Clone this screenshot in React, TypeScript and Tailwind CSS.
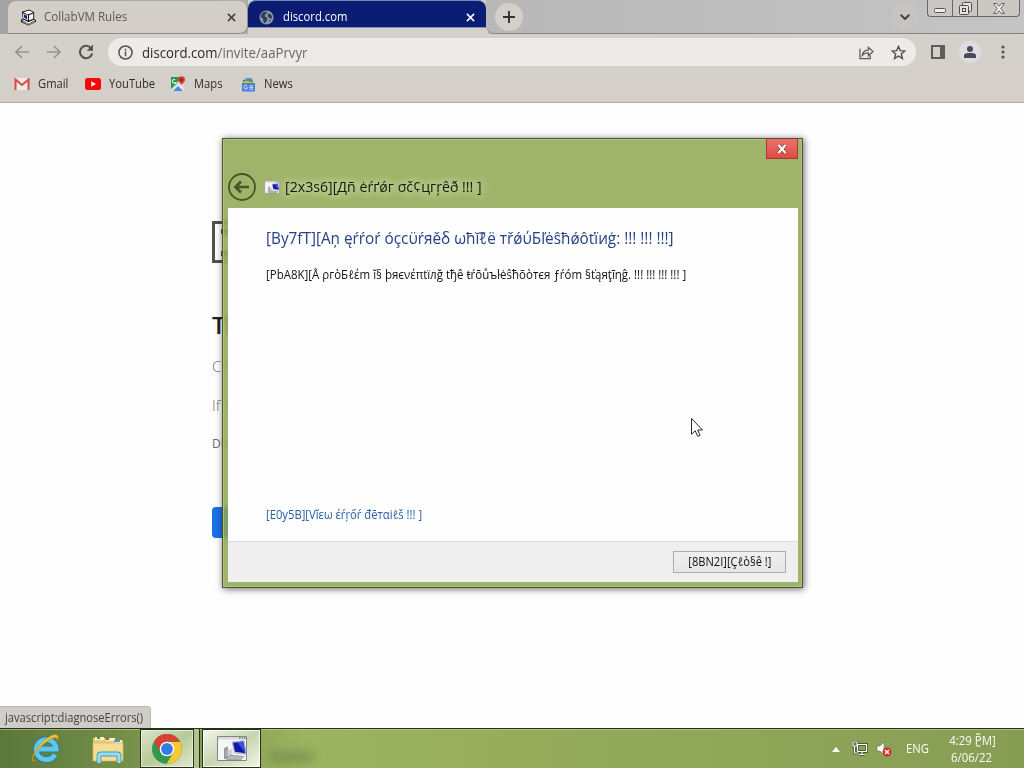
import type { ReactNode } from "react";

function CloseIcon({ className }: { className: string }) {
  return (
    <svg viewBox="0 0 10 10" className={className} fill="none" stroke="currentColor" strokeWidth="1.7">
      <path d="M1 1l8 8M9 1L1 9" />
    </svg>
  );
}

function CollabIcon() {
  return (
    <svg viewBox="0 0 18 18" className="h-[17px] w-[17px]">
      <path d="M2 3l8-2.500 5 3v7l2 1.500v1.500l-8 4L1 14v-2.500l2-1z" fill="#111" />
      <path d="M3.500 3.500L10 1.700l3.800 2.100L8 5.800z" fill="#fff" />
      <path d="M3 4.500l5.500 2.200v5.600L3.500 10z" fill="#e9e9ee" />
      <path d="M4 5.800l3.500 1.400v3.600L4.500 9.300z" fill="#141c78" />
      <path d="M9.500 6.500L14 4.800v5.500l-4.500 2z" fill="#f4f4f4" />
      <path d="M2.200 12l1.800-.500 5 2.500 5.500-2.700 1.300.700L9 15.500z" fill="#fff" />
      <path d="M2 13.300l7 3 6.800-3.300" fill="none" stroke="#ddd" strokeWidth=".8" />
    </svg>
  );
}

function GlobeIcon() {
  return (
    <svg viewBox="0 0 16 16" className="h-[15px] w-[15px]">
      <circle cx="8" cy="8" r="7.500" fill="#8d98a5" />
      <path d="M2 5.500C3 3 5.500 1.800 8.500 2L8 4l-2 1 .500 2L9 8.500 8.500 11 6.500 14C4 13 4.500 10.500 4.500 9.500L2 7.500zM10.500 3.500L13 5l1 3-1.500 1.500L10.500 8 9 6.500zM10.500 11l2-.500-1.500 2z" fill="#2c3b5e" />
    </svg>
  );
}

function TabStrip() {
  return (
    <div className="flex h-[34px] bg-linear-to-r from-[#a3a3a5] via-[#bababa] to-[#c2c2c2] pl-2">
      <div className="mt-px flex h-[33px] w-60 items-center rounded-t-lg rounded-br-lg border-r border-b border-[#8e8b86] bg-[#d3cec7] pr-[11px] pl-3 text-[#5b5854]">
        <CollabIcon />
        <span className="ml-[7px] origin-left scale-x-[0.965] text-[12px] whitespace-nowrap">CollabVM Rules</span>
        <CloseIcon className="ml-auto h-[9px] w-[9px] text-[#45423f]" />
      </div>
      <div className="h-[34px] w-[240px] bg-[#d5d0ca]">
        <div className="flex h-[28px] w-[238px] items-center rounded-t-lg border-t border-b border-t-[#7188b5] border-b-[#8290b5] bg-[#0b1d72] pt-[8px] pr-[11px] pb-[2px] pl-[11px] text-white">
          <GlobeIcon />
          <span className="ml-[9px] origin-left scale-x-[0.94] text-[12px] whitespace-nowrap">discord.com</span>
          <CloseIcon className="ml-auto h-[9px] w-[9px]" />
        </div>
      </div>
      <div className="-ml-[2px] flex h-[34px] flex-1 rounded-bl-lg border-b border-[#858585] bg-linear-to-r from-[#b8b8b8] to-[#c4c4c4]">
        <div className="mt-[3px] ml-[9px] flex h-7 w-7 items-center justify-center rounded-full bg-[#d3cfc9]">
          <svg viewBox="0 0 12 12" className="h-3 w-3" stroke="#333" strokeWidth="1.900">
            <path d="M6 0v12M0 6h12" />
          </svg>
        </div>
        <div className="mt-[3px] ml-auto flex h-7 w-7 items-center justify-center rounded-full bg-[#c8c4bf]">
          <svg viewBox="0 0 10 6" className="h-[6px] w-[10px]" fill="none" stroke="#444" strokeWidth="2">
            <path d="M.700.700L5 5l4.300-4.300" />
          </svg>
        </div>
        <div className="mr-1 ml-2 flex h-[17px] w-[93px] rounded-b border border-t-0 border-[#686664] bg-[#cbc8c3]">
          <span className="flex w-[25px] items-center justify-center border-r border-[#686664] pt-[5px]">
            <svg viewBox="0 0 12 5" className="h-[5px] w-3">
              <rect x=".500" y=".500" width="11" height="4" rx="1" fill="#eee" stroke="#555" />
            </svg>
          </span>
          <span className="flex w-[25px] items-center justify-center border-r border-[#686664]">
            <svg viewBox="0 0 13 13" className="h-[13px] w-[13px]" fill="#e5e3df" stroke="#4c4c4c">
              <rect x="3.500" y=".500" width="9" height="9" rx="1" />
              <rect x=".500" y="3.500" width="9" height="9" rx="1" />
              <rect x="3.500" y="6.500" width="3" height="3" />
            </svg>
          </span>
          <span className="flex flex-1 items-center justify-center">
            <svg viewBox="0 0 12 11" className="h-[11px] w-3">
              <path d="M.600.500h3L6 3.300 8.400.500h3L7.800 5.500l3.600 5h-3L6 7.700l-2.400 2.800h-3l3.600-5z" fill="#eee" stroke="#555" strokeWidth=".9" />
            </svg>
          </span>
        </div>
      </div>
    </div>
  );
}

function Toolbar() {
  return (
    <div className="flex h-9 items-center bg-[#d4d0ca]">
      <svg viewBox="0 0 16 14" className="ml-[14px] h-[14px] w-4" fill="none" stroke="#96928e" strokeWidth="1.600">
        <path d="M15 7H2M8 1L2 7l6 6" />
      </svg>
      <svg viewBox="0 0 16 14" className="ml-4 h-[14px] w-4" fill="none" stroke="#96928e" strokeWidth="1.600">
        <path d="M1 7h13M8 1l6 6-6 6" />
      </svg>
      <svg viewBox="0 0 16 16" className="ml-4 h-4 w-4" fill="none" stroke="#56534f" strokeWidth="2.100">
        <path d="M13.300 4.500A6.200 6.200 0 1 0 14.200 9.500" />
        <path d="M15 .500v6.300H8.700z" fill="#56534f" stroke="none" />
      </svg>
      <div className="ml-[14px] flex h-7 w-[808px] items-center rounded-full bg-[#ecebe7] pr-[10px] pl-[10px]">
        <svg viewBox="0 0 16 16" className="h-[15px] w-[15px]" fill="none" stroke="#55524f" strokeWidth="1.600">
          <circle cx="8" cy="8" r="7" />
          <path d="M8 7v5M8 4v1.800" />
        </svg>
        <span className="ml-[9px] origin-left scale-x-[0.945] text-[14px] whitespace-nowrap text-[#2b2a29]">
          discord.com<span className="text-[#6a6764]">/invite/aaPrvyr</span>
        </span>
        <svg viewBox="0 0 16 16" className="ml-auto h-[15px] w-[15px]" fill="none" stroke="#5c5956" strokeWidth="1.300">
          <path d="M1 4v10.500h11V11" />
          <path d="M3.500 11c.500-4 3-5.500 6.500-5.500V2.500L15 7l-5 4.500V8.500C7 8.500 5 9 3.500 11z" />
        </svg>
        <svg viewBox="0 0 16 16" className="ml-[17px] h-[15px] w-[15px]" fill="none" stroke="#55524f" strokeWidth="1.500">
          <path d="M8 1.500l1.900 4.500 4.800.400-3.700 3.200 1.200 4.800L8 11.800l-4.200 2.600L5 9.600 1.300 6.400l4.800-.400z" />
        </svg>
      </div>
      <svg viewBox="0 0 14 14" className="ml-[15px] h-[14px] w-[14px]">
        <path d="M0 0h14v14H0zM2 2v10h7V2z" fill="#605d59" fillRule="evenodd" />
      </svg>
      <div className="ml-[14px] flex h-[22px] w-[22px] items-center justify-center rounded-full bg-[#dddde1]">
        <svg viewBox="0 0 12 12" className="h-3 w-3" fill="#474b59">
          <circle cx="6" cy="3" r="3" />
          <path d="M0 12V9.500C0 7.500 3 7 6 7s6 .500 6 2.500V12z" />
        </svg>
      </div>
      <svg viewBox="0 0 4 14" className="ml-5 h-[14px] w-1" fill="#56534f">
        <circle cx="2" cy="2" r="1.600" />
        <circle cx="2" cy="7" r="1.600" />
        <circle cx="2" cy="12" r="1.600" />
      </svg>
    </div>
  );
}

function Bookmark({ label, width, children }: { label: string; width: string; children: ReactNode }) {
  return (
    <div className={`flex items-center ${width}`}>
      {children}
      <span className="ml-2 origin-left scale-x-[0.935] text-[12px] whitespace-nowrap text-[#2f2d2b]">{label}</span>
    </div>
  );
}

function BookmarksBar() {
  return (
    <div className="flex h-[33px] items-center border-b border-[#b1aeaa] bg-[#d4d0c9] pb-[4px] pl-[14px]">
      <Bookmark label="Gmail" width="w-[71px]">
        <svg viewBox="0 0 16 12" className="h-3 w-4">
          <path d="M1 0h14v12H1z" fill="#eeeae7" />
          <path d="M1.500 12V1.500L8 7l6.500-5.500V12" fill="none" stroke="#d64a48" strokeWidth="2" />
        </svg>
      </Bookmark>
      <Bookmark label="YouTube" width="w-[85px]">
        <svg viewBox="0 0 16 12" className="h-3 w-4">
          <rect width="16" height="12" rx="2.500" fill="#f50808" />
          <path d="M6.300 3.300L11 6l-4.700 2.700z" fill="#fff" />
        </svg>
      </Bookmark>
      <Bookmark label="Maps" width="w-[71px]">
        <svg viewBox="0 0 16 16" className="h-4 w-4">
          <path d="M1 1h10L6 8l-5 5z" fill="#23985a" />
          <path d="M1 15L12 3l2 12z" fill="#e9e7e0" />
          <path d="M3 15l5-5 5 5z" fill="#4887ec" />
          <path d="M5 3.500a2 2 0 1 0 1 3H4" fill="none" stroke="#d5f2da" strokeWidth="1.100" />
          <path d="M11.500 10c0-2.500-3.500-3.500-3.500-6.200a3.500 3.500 0 0 1 7 0c0 2.700-3.500 3.700-3.500 6.200z" fill="#d83c35" />
          <circle cx="11.500" cy="3.800" r="1.300" fill="#811b1b" />
        </svg>
      </Bookmark>
      <Bookmark label="News" width="w-[71px]">
        <svg viewBox="0 0 16 16" className="h-[15px] w-[15px]">
          <path d="M2 3l10-1 1 4H2z" fill="#2c9b58" />
          <path d="M5 1h6v3H5z" fill="#5a91c2" />
          <path d="M1 6l4-2 10 2v2H1z" fill="#e3b83b" />
          <rect x="1" y="6.500" width="14" height="9" rx="1" fill="#4680df" />
          <path d="M6.500 9.500a2 2 0 1 0 .500 2H5.500M9 9.500h4M9 11.300h4M9 13h4" fill="none" stroke="#dce8ff" strokeWidth="1" />
        </svg>
      </Bookmark>
    </div>
  );
}

// Error page that is mostly hidden behind the troubleshooter window
function ErrorPage() {
  return (
    <div className="flex-1 bg-[#fefefe] pt-[118px] pl-[212px] text-[#6b6e72]">
      <div className="h-[42px] w-[52px] border-[3px] border-[#535353] pt-[5px] pl-[6px]">
        <div className="h-[5px] w-3 bg-[#535353]" />
        <div className="mt-[17px] h-[5px] w-3 bg-[#535353]" />
      </div>
      <p className="mt-[46px] text-[24px] leading-8 font-semibold text-[#202124]">This site can’t be reached</p>
      <p className="mt-[14px] text-[15px] leading-[22px] font-light">Check if there is a typo in discord.com.</p>
      <p className="mt-[17px] text-[15px] leading-[22px] font-light">If spelling is correct, try running Windows Network Diagnostics.</p>
      <p className="mt-[19px] text-[12px] leading-[18px]">DNS_PROBE_FINISHED_NXDOMAIN</p>
      <div className="mt-[54px] h-[31px] w-[75px] rounded bg-[#1b73e8]" />
    </div>
  );
}

function ComputerIcon({ className }: { className: string }) {
  return (
    <svg viewBox="0 0 30 26" className={className}>
      <path d="M.500.500h29v24H.500z" fill="#f6f6f6" stroke="#858585" />
      <path d="M1 1h28v2.500H1z" fill="#d9dadd" />
      <path d="M22 2h1.500M24.500 2H26M27 2h1.500" stroke="#444" />
      <path d="M7.500 12.500l3-1.500v10l-3 1.500z" fill="#aaa" stroke="#666" strokeWidth=".6" />
      <path d="M10.500 14l5-1v8l-5 1z" fill="#d0d0d6" />
      <path d="M15 6l12-1.500 2.500 14-12-1.500z" fill="#c9cedc" stroke="#777c94" strokeWidth=".4" />
      <path d="M16 6.800l10.200-1.300 2.200 11.800-10.400-1.500z" fill="#1018a8" />
      <path d="M20 6.300l6.200-.800 2.200 11.800z" fill="#3d50d8" />
      <path d="M8 22.500l6-3.500 13 1.500-3.500 3.500H11z" fill="#b5b6bd" stroke="#777" strokeWidth=".5" />
    </svg>
  );
}

function TroubleshooterWindow() {
  return (
    <div className="absolute top-[138px] left-[222px] flex h-[450px] w-[581px] flex-col border border-[#4b582f] bg-[#8fa650]/85 pr-1 pb-[5px] pl-[5px] shadow-[1px_1px_7px_rgba(0,0,0,0.6),inset_0_0_0_1px_rgba(190,205,150,0.6)] backdrop-blur-[2px]">
      <div className="h-[69px] shrink-0">
        <div className="ml-auto flex h-[20px] w-[32px] items-center justify-center border border-t-0 border-[#a83a35] bg-linear-to-b from-[#ee7069] to-[#dc4c48]">
          <svg viewBox="0 0 12 10" className="h-[10px] w-3">
            <path d="M2.500 1l7 8M9.500 1l-7 8" stroke="#7d3c3c" strokeWidth="3.600" />
            <path d="M2.500 1l7 8M9.500 1l-7 8" stroke="#fff" strokeWidth="2.300" />
          </svg>
        </div>
        <div className="mt-[14px] flex h-[28px] items-center">
          <svg viewBox="0 0 28 28" className="h-7 w-7" fill="none" stroke="#46552a">
            <circle cx="14" cy="14" r="13" strokeWidth="1.800" />
            <path d="M21 14H8M13 8.500L7.500 14l5.500 5.500" strokeWidth="2.700" />
          </svg>
          <ComputerIcon className="ml-[8px] h-[13px] w-4" />
          <span className="ml-[5px] origin-left scale-x-[0.977] text-[14.500px] whitespace-nowrap text-[#141a0b] [text-shadow:0_0_7px_#dce6bf,0_0_10px_#dce6bf]">
            [2x3s6][Дñ ėŕґǿг σč¢цгŗêð !!! ]
          </span>
        </div>
      </div>
      <div className="flex flex-1 flex-col bg-[#fefefe] pl-[38px] text-[12px]">
        <p className="mt-[18px] h-6 origin-left scale-x-[0.957] self-start text-[16px] leading-6 whitespace-nowrap text-[#254282]">
          [By7fT][Aņ ęŕŕoŕ óçcϋŕяěδ ωħĭℓ̃ë тřǿύБľėŝħǿôťïиģ: !!! !!! !!!]
        </p>
        <p className="mt-[16px] h-[18px] origin-left scale-x-[0.957] self-start leading-[18px] whitespace-nowrap text-[#111]">
          [PbA8K][Å ρгòБℓέm ĭ§ þяєνέπtïлğ tђê ŧŕōůъŀėŝħõòтєя ƒŕóm §ťąяţīηĝ. !!! !!! !!! !!! ]
        </p>
        <p className="mt-auto mb-[17px] h-[18px] origin-left scale-x-[0.936] self-start leading-[18px] whitespace-nowrap text-[#2860a2]">
          [E0y5B][Vĭεω έŕŗőŕ đēтαiℓš !!! ]
        </p>
      </div>
      <div className="flex h-[41px] shrink-0 justify-end border-t border-[#dcdcdc] bg-[#efefef] pt-[9px] pr-3">
        <button className="flex h-[22px] w-[113px] items-center justify-center border border-[#acacac] bg-linear-to-b from-[#f0f0f0] to-[#e6e6e6] text-[12px] text-[#111]">
          <span className="scale-x-[0.925] whitespace-nowrap">[8BN2I][Çℓò§ê !]</span>
        </button>
      </div>
    </div>
  );
}

function ExplorerIcons() {
  return (
    <>
      <svg viewBox="0 0 32 32" className="ml-[30px] h-8 w-8">
        <path d="M25 21.500A10 10 0 1 1 26.200 16H8" fill="none" stroke="#28789b" strokeWidth="6.500" />
        <path d="M25 21.500A10 10 0 1 1 26.200 16H8" fill="none" stroke="#5fc7e9" strokeWidth="4.800" />
        <path d="M7 27c-6 4-6-3-1-10C11 9 23-1 27 2c2 2 1 4 0 6 1-4-2-4-6-2C12 11 3 21 3 26c0 2 2 2 4 1z" fill="#f1c536" stroke="#b18419" strokeWidth=".5" />
      </svg>
      <svg viewBox="0 0 32 28" className="ml-[30px] h-7 w-8">
        <path d="M1 3h12l2 3h16v20H1z" fill="#e9cd78" />
        <path d="M3 2h9v3H3zM14 3h9v3h-9zM23 5h7v3h-7z" fill="#faf0ca" />
        <path d="M5 2h3v2H5z" fill="#469a45" />
        <path d="M14 3h3v2h-3z" fill="#be4f38" />
        <path d="M22 5h6v2h-6z" fill="#4698d3" />
        <path d="M1 8h30v18H1z" fill="#f4dc92" stroke="#d6b75b" strokeWidth=".7" />
        <path d="M7 28v-7q0-2 2-2h16q2 0 2 2v7" fill="none" stroke="#4797b8" strokeWidth="4.800" />
        <path d="M7 28v-7q0-2 2-2h16q2 0 2 2v7" fill="none" stroke="#9bdcf2" strokeWidth="3" />
      </svg>
    </>
  );
}

function ChromeIcon() {
  return (
    <svg viewBox="0 0 30 30" className="h-[30px] w-[30px]">
      <circle cx="15" cy="15" r="15" fill="#2e9a4b" />
      <path d="M2 7.500A15 15 0 0 1 28 7.500H15L9 19z" fill="#dc4035" />
      <path d="M15 8h13.200A15 15 0 0 1 14.500 30L21.500 18.500z" fill="#f8c934" />
      <circle cx="15" cy="15" r="7.300" fill="#fff" />
      <circle cx="15" cy="15" r="5.900" fill="#327ae4" />
    </svg>
  );
}

function Taskbar() {
  return (
    <div className="flex h-10 items-center border-t border-[#26301a] bg-linear-to-r from-[#5b783b] via-[#9cb35f] via-30% to-[#879d54] shadow-[inset_0_1px_0_rgba(195,213,155,0.6)]">
      <ExplorerIcons />
      <div className="ml-4 flex h-[39px] w-[54px] items-center justify-center border border-[#25301a] bg-linear-to-br from-[#dce5cd] via-[#b8c997] to-[#e0ead0] shadow-[inset_0_0_0_1px_rgba(245,250,230,0.6)]">
        <ChromeIcon />
      </div>
      <div className="h-[39px] w-[6px] border-r border-[#25301a] bg-[#b3c28c]" />
      <div className="ml-[2px] flex h-[39px] w-[59px] items-center justify-center border border-[#25301a] bg-linear-to-br from-[#f4f7ed] via-[#c8d5b0] to-[#f1f5e6] shadow-[inset_0_0_0_1px_rgba(255,255,245,0.8)]">
        <ComputerIcon className="h-[26px] w-[30px]" />
      </div>
      <div className="mt-4 ml-[7px] h-3 w-[46px] rounded-full bg-[#6f874b]/60 blur-[4px]" />
      <div className="ml-auto flex h-full items-center text-[12px] text-[#fbfdf4]">
        <svg viewBox="0 0 8 5" className="mt-px h-[5px] w-2" fill="#fff">
          <path d="M0 5l4-5 4 5z" />
        </svg>
        <svg viewBox="0 0 16 15" className="ml-3 h-[15px] w-4">
          <path d="M5.500 3.500h9v7h-9zM7 13.500h6M10 11v2M2.500 5v7h4M1 1h4v4H1z" fill="none" stroke="#39462c" strokeWidth="2.500" />
          <path d="M5.500 3.500h9v7h-9zM7 13.500h6M10 11v2M2.500 5v7h4M1 1h4v4H1z" fill="none" stroke="#fff" strokeWidth="1.200" />
        </svg>
        <svg viewBox="0 0 16 16" className="ml-2 h-4 w-4">
          <path d="M1 5h3l4-4v13l-4-4H1z" fill="#fff" stroke="#65704f" strokeWidth=".6" />
          <circle cx="11" cy="11" r="4.500" fill="#d42f2a" />
          <path d="M9 9l4 4M13 9l-4 4" stroke="#fff" strokeWidth="1.400" />
        </svg>
        <span className="ml-[14px] w-6 origin-left scale-x-[0.94]">ENG</span>
        <div className="mr-[25px] ml-[15px] flex w-[54px] flex-col items-center leading-[17px] whitespace-nowrap">
          <span className="scale-x-[0.95]">4:29 P̰̃M]</span>
          <span className="scale-x-[0.95]">6/06/22</span>
        </div>
      </div>
    </div>
  );
}

export default function App() {
  return (
    <div className="relative flex h-[768px] w-[1024px] flex-col overflow-hidden bg-white font-['Open_Sans','Noto_Sans','DejaVu_Sans',sans-serif]">
      <TabStrip />
      <Toolbar />
      <BookmarksBar />
      <ErrorPage />
      <Taskbar />
      <div className="absolute bottom-10 left-0 flex h-[22px] w-[151px] items-center rounded-tr border-t border-r border-[#bcb9b4] bg-[#d0ccc6] pl-[5px] text-[12px] text-[#45423f]">
        <span className="origin-left scale-x-[0.93] whitespace-nowrap">javascript:diagnoseErrors()</span>
      </div>
      <TroubleshooterWindow />
      <svg viewBox="0 0 12 19" className="absolute top-[418px] left-[691px] h-[19px] w-3">
        <path d="M.500.500v15.800l3.700-3.500 2.500 5.500 2.400-1-2.400-5.300h4.800z" fill="#fff" stroke="#111" strokeWidth=".9" />
      </svg>
    </div>
  );
}
